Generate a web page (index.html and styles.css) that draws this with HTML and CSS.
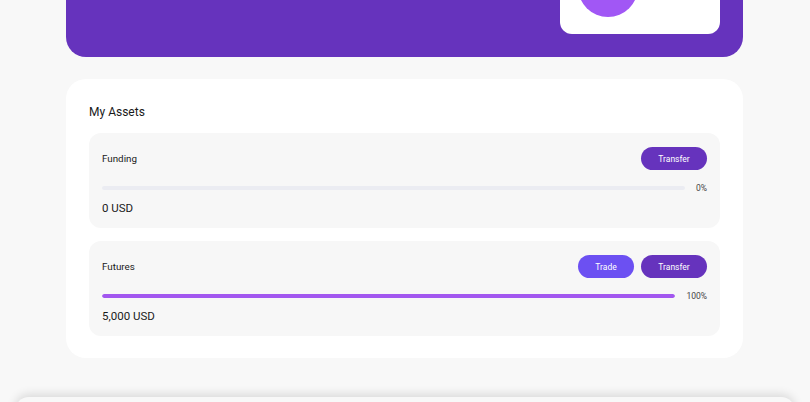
FILE: index.html
```html
<!DOCTYPE html>
<html>
<head>
<meta charset="utf-8">
<link rel="stylesheet" href="styles.css">
</head>
<body>
<div class="page">
  <div class="banner">
    <div class="profile-card">
      <div class="avatar"></div>
    </div>
  </div>
  <section class="assets">
    <h2 class="assets-title">My Assets</h2>
    <div class="asset-box">
      <div class="asset-head">
        <span class="asset-name">Funding</span>
        <div class="actions">
          <button class="btn btn-transfer">Transfer</button>
        </div>
      </div>
      <div class="progress-row">
        <div class="track"><div class="fill" style="width:0%"></div></div>
        <span class="pct">0%</span>
      </div>
      <div class="amount">0 USD</div>
    </div>
    <div class="asset-box">
      <div class="asset-head">
        <span class="asset-name">Futures</span>
        <div class="actions">
          <button class="btn btn-trade">Trade</button>
          <button class="btn btn-transfer">Transfer</button>
        </div>
      </div>
      <div class="progress-row">
        <div class="track"><div class="fill" style="width:100%"></div></div>
        <span class="pct">100%</span>
      </div>
      <div class="amount">5,000 USD</div>
    </div>
  </section>
</div>
<div class="bottom-sheet"></div>
</body>
</html>
```
FILE: styles.css
```css
* { box-sizing: border-box; }
html, body { margin: 0; padding: 0; }
body {
  background: #f8f8f8;
  font-family: Roboto, "Noto Sans", sans-serif;
  color: #1c1c1c;
  height: 402px;
  overflow: hidden;
}
.page {
  width: 677px;
  margin-left: 66px;
}
.banner {
  height: 57px;
  background: #6633bd;
  border-radius: 0 0 20px 20px;
  display: flex;
  justify-content: flex-end;
  padding-right: 23px;
}
.profile-card {
  width: 160px;
  height: 34px;
  background: #ffffff;
  border-radius: 0 0 12px 12px;
  overflow: hidden;
  padding-left: 18px;
}
.avatar {
  width: 60px;
  height: 60px;
  border-radius: 50%;
  background: #a157f5;
  margin-top: -43px;
}
.assets {
  margin-top: 22px;
  background: #ffffff;
  border-radius: 20px;
  padding: 25px 23px 22px 23px;
}
.assets-title {
  margin: 0 0 12px 0;
  font-size: 12px;
  line-height: 17px;
  font-weight: 400;
  color: #1a1a1a;
}
.asset-box {
  background: #f7f7f7;
  border-radius: 12px;
  padding: 14px 13px 12px 13px;
  margin-bottom: 13px;
}
.asset-box:last-child { margin-bottom: 0; }
.asset-head {
  display: flex;
  align-items: center;
  justify-content: space-between;
  height: 23px;
}
.asset-name {
  font-size: 9.8px;
  color: #1a1a1a;
}
.actions {
  display: flex;
  gap: 7px;
}
.btn {
  border: none;
  height: 23px;
  border-radius: 12px;
  color: #ffffff;
  font-family: inherit;
  font-size: 8.5px;
  padding: 0;
  cursor: pointer;
}
.btn-transfer {
  width: 66px;
  background: #6633bd;
}
.btn-trade {
  width: 56px;
  background: #6c50f2;
}
.progress-row {
  display: flex;
  align-items: center;
  gap: 11px;
  height: 12px;
  margin-top: 12px;
}
.track {
  flex: 1;
  height: 4px;
  border-radius: 2px;
  background: #ebecf2;
  overflow: hidden;
}
.fill {
  height: 100%;
  background: #a257ef;
  border-radius: 2px;
}
.pct {
  font-size: 8.5px;
  color: #444;
}
.amount {
  margin-top: 6px;
  font-size: 11.5px;
  line-height: 16px;
  color: #1a1a1a;
}
.bottom-sheet {
  position: fixed;
  left: 15px;
  right: 15px;
  top: 397px;
  height: 40px;
  background: #f8f8f8;
  border-radius: 14px 14px 0 0;
  box-shadow: 0 -3px 10px rgba(0,0,0,0.12);
}
```
